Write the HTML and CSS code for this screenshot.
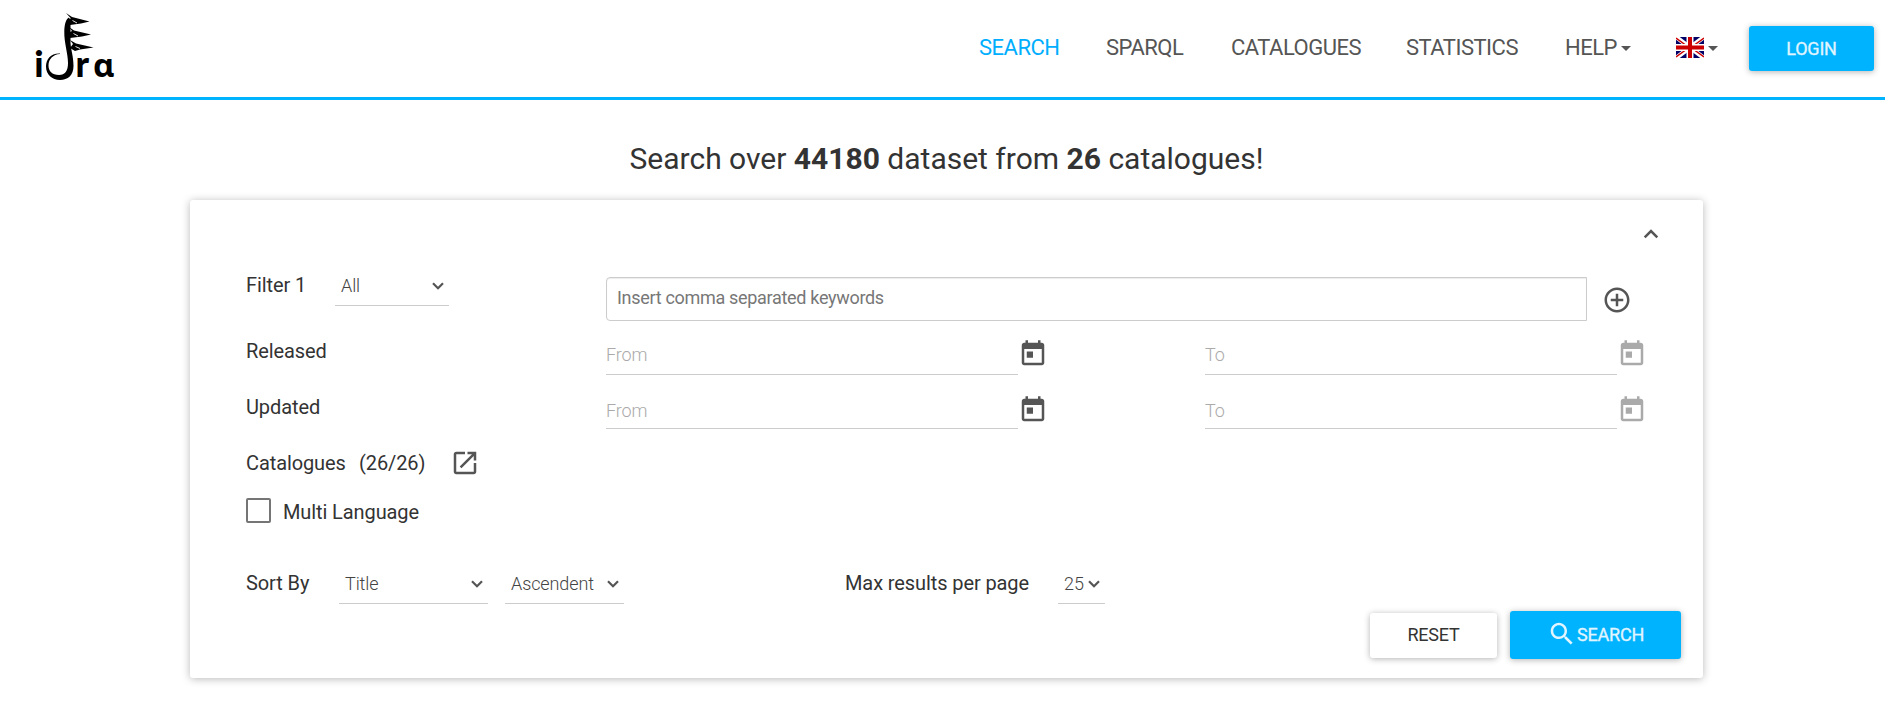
FILE: index.html
```html
<!DOCTYPE html>
<html lang="en">
<head>
<meta charset="utf-8">
<title>Idra</title>
<link rel="stylesheet" href="styles.css">
</head>
<body>
<svg class="defs" width="0" height="0">
  <symbol id="today" viewBox="0 0 24 24"><path d="M19 3h-1V1h-2v2H8V1H6v2H5c-1.110 0-1.990.9-1.990 2L3 19c0 1.100.890 2 2 2h14c1.100 0 2-.9 2-2V5c0-1.100-.9-2-2-2zm0 16H5V8h14v11zM7 10h5v5H7z"/></symbol>
  <symbol id="down" viewBox="0 0 12 8"><path d="M1 1.300l5 5 5-5" fill="none" stroke="#555" stroke-width="2.200"/></symbol>
</svg>
<header class="header">
  <svg class="logo" width="90" height="86" viewBox="30 10 90 86">
    <text class="logo-letter" x="34.300" y="77">i</text>
    <text class="logo-letter" x="75.500" y="77">r</text>
    <text class="logo-letter logo-a" x="93" y="77">ɑ</text>
    <path d="M60 53.500C51 53 46 59 46 66.500C46 74.500 52 80 60 80C68 80 73.500 75 73.500 66C73.500 57 71 50 70.500 43L70.500 22L69 17.500C66 19 64.500 24 64.300 31C64 43 68 53 68 63C68 71 65 75 59 75C52 75 48.500 71 48.500 65.500C48.500 59 53 54.500 60 54Z"/>
    <path d="M66 13L72 17L89.500 21.500L81 23.500L70 25L67 19L71 18.500ZM69 27L74 30.500L91 34.500L82 36.500L70 38L68 33L72 31ZM70 40L76 43.500L93.500 47.500L80 49.500L75 51L70 48L73 44Z"/>
    <path d="M72.500 20.500L77 23M73.500 33.500L78 36M75.500 46.500L80 48.500" stroke="#fff" stroke-width=".9"/>
  </svg>
  <nav class="nav">
    <a class="nav-item active">SEARCH</a>
    <a class="nav-item sparql">SPARQL</a>
    <a class="nav-item catalogues">CATALOGUES</a>
    <a class="nav-item statistics">STATISTICS</a>
    <a class="nav-item help">HELP<i class="caret"></i></a>
    <a class="nav-item lang">
      <svg width="28" height="21" viewBox="0 0 28 21"><path fill="#006" d="M0 0h28v21H0z"/><path stroke="#fff" stroke-width="4.500" d="M0 0l28 21M28 0L0 21"/><path stroke="#c00" stroke-width="1.500" d="M0 1l11 8M28 1l-11 8M0 20l11-8M28 20l-11-8"/><path stroke="#fff" stroke-width="7" d="M14 0v21M0 10.500h28"/><path stroke="#c00" stroke-width="4" d="M14 0v21M0 10.500h28"/></svg><i class="caret"></i>
    </a>
  </nav>
  <button class="btn primary login">LOGIN</button>
</header>
<main>
  <h1 class="title">Search over <b>44180</b> dataset from <b>26</b> catalogues!</h1>
  <section class="card">
    <div class="collapse"><svg width="16" height="10" viewBox="0 0 16 10"><path d="M1.700 8.300L8 2l6.300 6.300" fill="none" stroke="#555" stroke-width="2.500"/></svg></div>
    <div class="row filter">
      <div class="label-col"><span class="label">Filter 1</span><div class="select all">All<svg width="12" height="8"><use href="#down"/></svg></div></div>
      <div class="keywords">Insert comma separated keywords</div>
      <svg class="plus" width="30" height="30" viewBox="0 0 24 24"><path d="M13 7h-2v4H7v2h4v4h2v-4h4v-2h-4V7zm-1-5C6.480 2 2 6.480 2 12s4.480 10 10 10 10-4.480 10-10S17.520 2 12 2zm0 18c-4.410 0-8-3.590-8-8s3.590-8 8-8 8 3.590 8 8-3.590 8-8 8z"/></svg>
    </div>
    <div class="row dates">
      <div class="label-col"><span class="label">Released</span></div>
      <div class="date from">From</div><svg class="cal" width="30" height="30"><use href="#today"/></svg>
      <div class="date to">To</div><svg class="cal muted" width="30" height="30"><use href="#today"/></svg>
    </div>
    <div class="row dates updated">
      <div class="label-col"><span class="label">Updated</span></div>
      <div class="date from">From</div><svg class="cal" width="30" height="30"><use href="#today"/></svg>
      <div class="date to">To</div><svg class="cal muted" width="30" height="30"><use href="#today"/></svg>
    </div>
    <div class="row catalogs">
      <span class="label name">Catalogues</span><span class="label count">(26/26)</span>
      <svg class="open" width="30" height="30" viewBox="0 0 24 24"><path d="M19 19H5V5h7V3H5c-1.110 0-2 .9-2 2v14c0 1.100.890 2 2 2h14c1.100 0 2-.9 2-2v-7h-2v7zM14 3v2h3.590l-9.830 9.830 1.410 1.410L19 6.410V10h2V3h-7z"/></svg>
    </div>
    <div class="row multi"><span class="checkbox"></span><span class="label">Multi Language</span></div>
    <div class="row sort">
      <span class="label sort-label">Sort By</span>
      <div class="select by">Title<svg width="12" height="8"><use href="#down"/></svg></div>
      <div class="select order">Ascendent<svg width="12" height="8"><use href="#down"/></svg></div>
      <span class="label max-label">Max results per page</span>
      <div class="select max">25<svg width="12" height="8"><use href="#down"/></svg></div>
    </div>
    <div class="actions">
      <button class="btn reset">RESET</button>
      <button class="btn primary search"><svg width="30" height="30" viewBox="0 0 24 24"><path d="M15.500 14h-.790l-.280-.270C15.410 12.590 16 11.110 16 9.500 16 5.910 13.090 3 9.500 3S3 5.910 3 9.500 5.910 16 9.500 16c1.610 0 3.090-.590 4.230-1.570l.270.280v.790l5 4.990L20.490 19l-4.990-5zm-6 0C7.010 14 5 11.990 5 9.500S7.010 5 9.500 5 14 7.010 14 9.500 11.990 14 9.500 14z"/></svg>SEARCH</button>
    </div>
  </section>
</main>
</body>
</html>
```
FILE: styles.css
```css
* { box-sizing: border-box; }
body { margin: 0; min-height: 702px; background: #fff; font-family: Roboto, sans-serif; font-size: 18px; color: #333; }
.defs { display: block; height: 0; }
.header { display: flex; height: 100px; padding: 0 11px 0 30px; border-bottom: 3px solid #00b3ff; }
.logo { margin: 10px auto 0 0; overflow: visible; }
.logo-letter { font: 900 36px Lato, sans-serif; }
.logo-a { font: 700 33px "Noto Sans", sans-serif; }
.nav { display: flex; height: 95px; align-items: center; }
.nav-item { display: flex; align-items: center; color: #555; font-size: 22px; line-height: 26px; letter-spacing: -0.5px; white-space: nowrap; }
.nav-item.active { color: #00aeff; width: 127px; }
.sparql { width: 125px; }
.catalogues { width: 175px; }
.statistics { width: 159px; }
.help { width: 111px; }
.lang { width: 73px; }
.lang svg { margin-top: -1px; }
.caret { border: 5px solid transparent; border-top-color: #555; border-bottom: 0; margin-left: 4px; margin-top: 1px; }
.btn { border: 0; border-radius: 3px; font: 400 18px Roboto, sans-serif; letter-spacing: -0.2px; display: flex; align-items: center; justify-content: center; padding: 0; box-shadow: 0 1px 6px rgba(0,0,0,.3); color: #333; background: #fff; }
.primary { background: #00b3ff; color: #e0f5ff; -webkit-text-stroke: .3px #e0f5ff; fill: #e0f5ff; }
.login { width: 125px; height: 45px; margin-top: 26px; }
.title { margin: 41px 0 0; padding-left: 8px; text-align: center; font-weight: 400; font-size: 30px; line-height: 36px; height: 59px; }
.title b { font-weight: 700; }
.card { width: 1513px; height: 478px; margin-left: 190px; padding: 29px 22px 0 56px; border-radius: 3px; box-shadow: 0 1px 8px rgba(0,0,0,.28); }
.collapse { height: 48px; display: flex; justify-content: flex-end; padding-right: 22px; }
.row { display: flex; }
.label { font-size: 20px; line-height: 24px; letter-spacing: -0.1px; white-space: nowrap; }
.label-col { width: 360px; flex: none; display: flex; }
.select { display: flex; justify-content: space-between; align-items: flex-start; font-weight: 300; line-height: 24px; border-bottom: 1px solid #ccc; height: 31px; padding: 0 5px 0 6px; color: #444; letter-spacing: -0.1px; }
.select svg { margin-top: 8px; }
.filter { height: 62px; }
.filter .label { width: 89px; margin-top: -4px; }
.filter .select { width: 114px; height: 32px; margin-top: -3px; }
.keywords { width: 981px; height: 44px; border: 1px solid #ccc; border-radius: 4px 0 0 4px; padding: 0 10px; line-height: 40px; letter-spacing: -0.31px; color: #777; box-shadow: inset 0 1px 1px rgba(0,0,0,.075); }
.plus { fill: #555; margin: 7.500px 0 0 14.500px; }
.dates { height: 56px; }
.date { font-weight: 300; color: #aaa; height: 36px; line-height: 32px; letter-spacing: -0.1px; border-bottom: 1px solid #ccc; }
.from { width: 412px; }
.to { width: 412px; margin-left: 157px; }
.cal { fill: #555; }
.muted { fill: #aaa; }
.updated { height: 53px; }
.updated .date { height: 34px; }
.catalogs { height: 50px; }
.catalogs .label { margin-top: 3px; }
.name { width: 113px; }
.count { width: 91px; }
.open { fill: #555; }
.multi { height: 60px; }
.checkbox { width: 25px; height: 25px; border: 2px solid #757575; border-radius: 2px; margin-right: 12px; }
.multi .label { margin-top: 2px; }
.sort { height: 39px; margin-top: 14px; }
.sort .select { height: 32px; }
.sort .label { margin-top: -1px; }
.sort-label { width: 93px; }
.by { width: 149px; margin-right: 17px; }
.order { width: 119px; }
.sort .max-label { margin-left: 221px; width: 213px; }
.max { width: 47px; }
.actions { display: flex; justify-content: flex-end; align-items: center; gap: 13px; height: 48px; }
.reset { width: 127px; height: 45px; padding-bottom: 1px; }
.search { width: 171px; height: 48px; padding-bottom: 1px; }
.search svg { margin-bottom: 2px; }
```
